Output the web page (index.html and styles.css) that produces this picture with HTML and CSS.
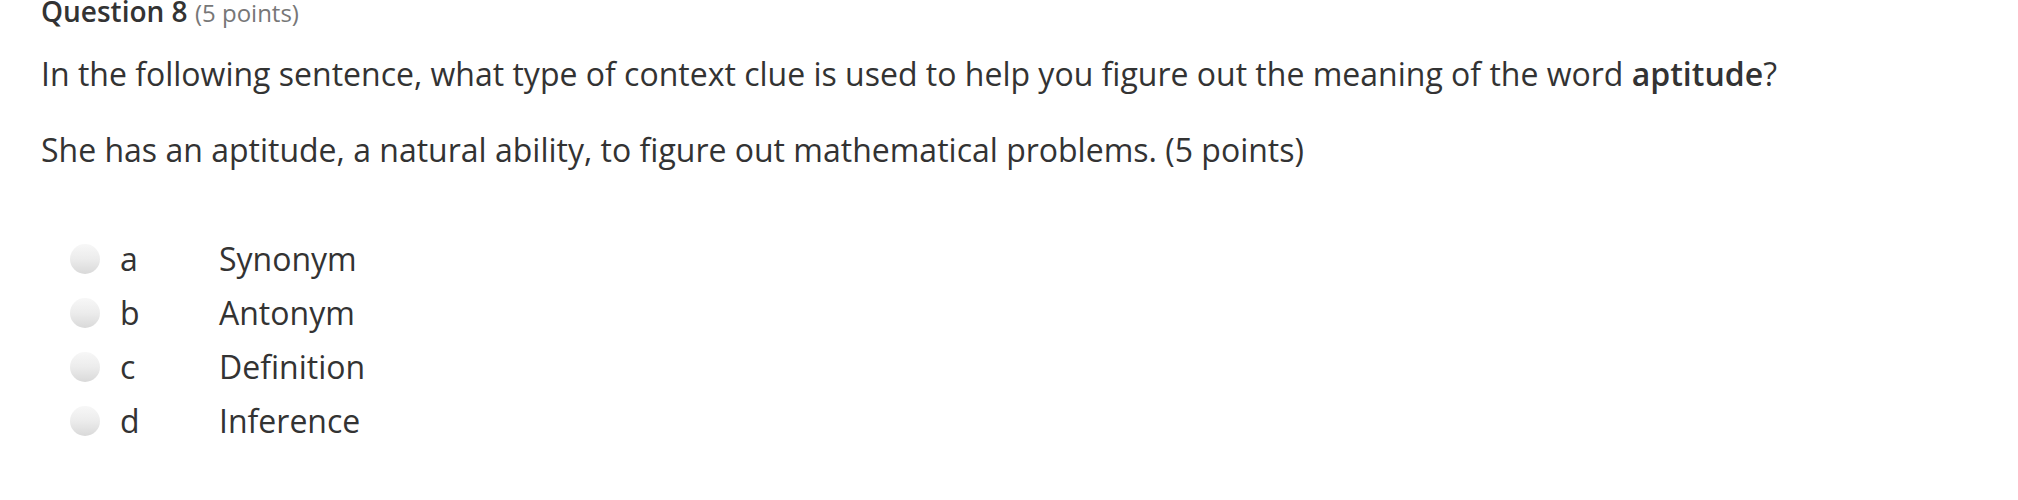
FILE: index.html
```html
<!DOCTYPE html>
<html>
<head>
<meta charset="utf-8">
<link rel="stylesheet" href="styles.css">
</head>
<body>
<div class="question">
  <div class="q-title"><span class="q-num">Question 8</span> <span class="q-points">(5 points)</span></div>
  <p class="q-text">In the following sentence, what type of context clue is used to help you figure out the meaning of the word <strong>aptitude</strong>?</p>
  <p class="q-text q-second">She has an aptitude, a natural ability, to figure out mathematical problems. (5 points)</p>
  <ul class="options">
    <li class="option"><span class="radio"></span><span class="letter">a</span><span class="answer">Synonym</span></li>
    <li class="option"><span class="radio"></span><span class="letter">b</span><span class="answer">Antonym</span></li>
    <li class="option"><span class="radio"></span><span class="letter">c</span><span class="answer">Definition</span></li>
    <li class="option"><span class="radio"></span><span class="letter">d</span><span class="answer">Inference</span></li>
  </ul>
</div>
</body>
</html>
```
FILE: styles.css
```css
html, body {
  margin: 0;
  padding: 0;
  background: #ffffff;
}
body {
  font-family: "Open Sans", "Liberation Sans", sans-serif;
  color: #333333;
}
.question {
  padding-left: 41px;
}
.q-title {
  font-size: 28px;
  line-height: 22px;
  height: 22px;
}
.q-num {
  font-weight: 600;
  color: #333333;
}
.q-points {
  font-size: 24px;
  color: #777777;
}
.q-text {
  margin: 30px 0 0 0;
  font-size: 32px;
  line-height: 44px;
}
.q-text strong {
  font-weight: 600;
}
.q-second {
  margin-top: 32px;
}
.options {
  list-style: none;
  margin: 60px 0 0 0;
  padding: 0;
}
.option {
  display: flex;
  align-items: center;
  height: 54px;
  font-size: 32px;
  line-height: 54px;
}
.radio {
  width: 30px;
  height: 30px;
  border-radius: 50%;
  margin-left: 29px;
  margin-right: 20px;
  background: linear-gradient(to bottom, #f7f7f7 0%, #ececec 50%, #d9d9d9 100%);
  flex: none;
}
.letter {
  width: 99px;
  flex: none;
}
.answer {
  flex: none;
}
```
